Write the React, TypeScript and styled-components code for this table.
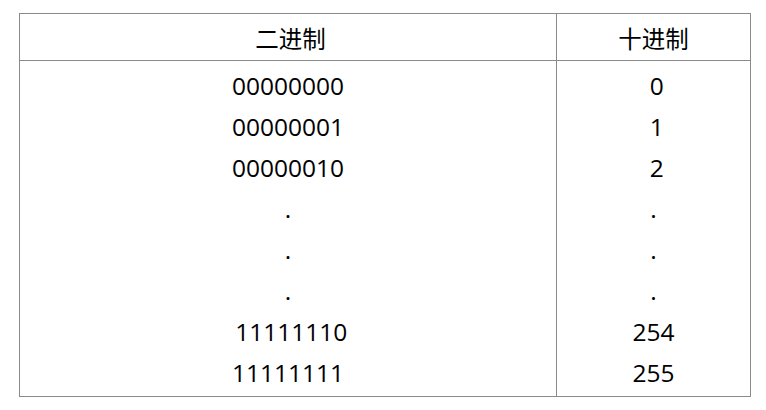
import React from 'react';
import styled, { createGlobalStyle } from 'styled-components';

const GlobalStyle = createGlobalStyle`
  html, body {
    margin: 0;
    padding: 0;
    background: #fff;
  }
  body {
    font-family: "Open Sans", "Noto Sans CJK SC", sans-serif;
    color: #000;
  }
`;

const Page = styled.div`
  padding: 13px 0 0 19px;
`;

const Table = styled.table`
  border-collapse: collapse;
  width: 731px;
  table-layout: fixed;
  font-size: 24.5px;
  border: 1px solid #8a8a8a;
`;

const HeadCell = styled.th<{ $w: number }>`
  width: ${(p) => p.$w}px;
  height: 47px;
  padding: 2px 0 0;
  box-sizing: border-box;
  font-weight: 400;
  font-size: 23.5px;
  font-family: "Noto Sans CJK SC", "Open Sans", sans-serif;
  text-align: center;
  border: 1px solid #8a8a8a;
  line-height: 44px;
`;

const Cell = styled.td<{ $first?: boolean; $last?: boolean }>`
  padding: ${(p) => (p.$first ? '4px' : '0')} 0 ${(p) => (p.$last ? '3px' : '0')};
  height: 41px;
  line-height: 41px;
  text-align: center;
  border-left: 1px solid #8a8a8a;
  border-right: 1px solid #8a8a8a;
  white-space: pre;
`;

const rows: [string, string][] = [
  ['00000000', '\u00a00'],
  ['00000001', '\u00a01'],
  ['00000010', '\u00a02'],
  ['.', '.'],
  ['.', '.'],
  ['.', '.'],
  ['\u00a011111110', '254'],
  ['11111111', '255'],
];

export default function App() {
  return (
    <>
      <GlobalStyle />
      <Page>
        <Table>
          <thead>
            <tr>
              <HeadCell $w={537}>&nbsp;二进制</HeadCell>
              <HeadCell $w={194}>十进制</HeadCell>
            </tr>
          </thead>
          <tbody>
            {rows.map(([bin, dec], i) => (
              <tr key={i}>
                <Cell $first={i === 0} $last={i === rows.length - 1}>{bin}</Cell>
                <Cell $first={i === 0} $last={i === rows.length - 1}>{dec}</Cell>
              </tr>
            ))}
          </tbody>
        </Table>
      </Page>
    </>
  );
}
